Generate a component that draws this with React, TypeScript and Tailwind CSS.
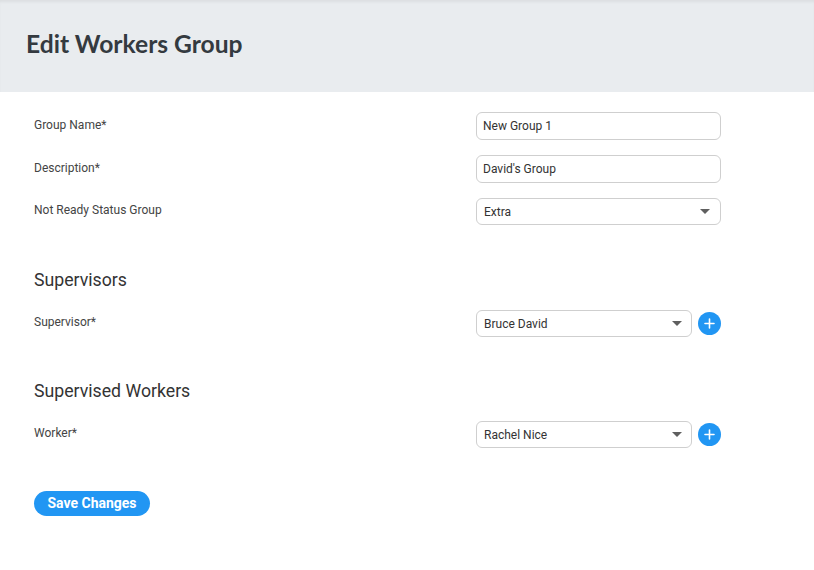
import React from "react";

const Caret = () => (
  <svg width="10" height="6" viewBox="0 0 10 6" className="shrink-0">
    <path d="M0 0 L10 0 L5 5 Z" fill="#5f5f5f" />
  </svg>
);

const PlusButton = () => (
  <button className="w-[23px] h-[23px] rounded-full bg-[#2196f3] flex items-center justify-center shrink-0">
    <svg width="11" height="11" viewBox="0 0 11 11">
      <path d="M5.5 1 V10 M1 5.5 H10" stroke="#fff" strokeWidth="1.6" strokeLinecap="round" />
    </svg>
  </button>
);

const TextField = ({ value }: { value: string }) => (
  <div className="w-[245px] h-[28px] border border-[#cfcfcf] rounded-[6px] bg-white flex items-center px-[6px] text-[12px] text-[#333]">
    {value}
  </div>
);

const SelectField = ({ value, short }: { value: string; short?: boolean }) => (
  <div
    className={
      (short ? "w-[216px] pl-[7px] pr-[9px] " : "w-[245px] pl-[7px] pr-[10px] ") +
      "h-[27px] border border-[#cfcfcf] rounded-[6px] bg-white flex items-center justify-between text-[12px] text-[#333]"
    }
  >
    <span>{value}</span>
    <Caret />
  </div>
);

const Row = ({ label, children }: { label: string; children: React.ReactNode }) => (
  <div className="grid grid-cols-[442px_1fr] items-center">
    <div className="text-[12px] text-[#444] -mt-[3px]">{label}</div>
    <div className="flex items-center gap-[6px]">{children}</div>
  </div>
);

export default function App() {
  return (
    <div className="w-[814px] h-[570px] bg-white" style={{ fontFamily: "Roboto, 'Liberation Sans', sans-serif" }}>
      <div className="h-[92px] bg-[#e9ecef] shadow-[inset_0_3px_3px_-1px_rgba(0,0,0,0.06)] flex items-center px-[26px]">
        <h1 className="text-[24.6px] font-bold text-[#343a40] -mt-[4px]" style={{ fontFamily: "Lato, 'Noto Sans', sans-serif" }}>
          Edit Workers Group
        </h1>
      </div>
      <div className="px-[34px] pt-[20px]">
        <div className="flex flex-col gap-[15px]">
          <Row label="Group Name*">
            <TextField value="New Group 1" />
          </Row>
          <Row label="Description*">
            <TextField value="David's Group" />
          </Row>
          <Row label="Not Ready Status Group">
            <SelectField value="Extra" />
          </Row>
        </div>

        <h2 className="mt-[43px] text-[17.7px] leading-[24px] text-[#333]">Supervisors</h2>
        <div className="mt-[18px]">
          <Row label="Supervisor*">
            <SelectField value="Bruce David" short />
            <PlusButton />
          </Row>
        </div>

        <h2 className="mt-[42px] text-[17.7px] leading-[24px] text-[#333]">Supervised Workers</h2>
        <div className="mt-[18px]">
          <Row label="Worker*">
            <SelectField value="Rachel Nice" short />
            <PlusButton />
          </Row>
        </div>

        <button className="mt-[43px] h-[25px] w-[116px] rounded-full bg-[#2196f3] text-white text-[14px] font-bold">
          Save Changes
        </button>
      </div>
    </div>
  );
}
